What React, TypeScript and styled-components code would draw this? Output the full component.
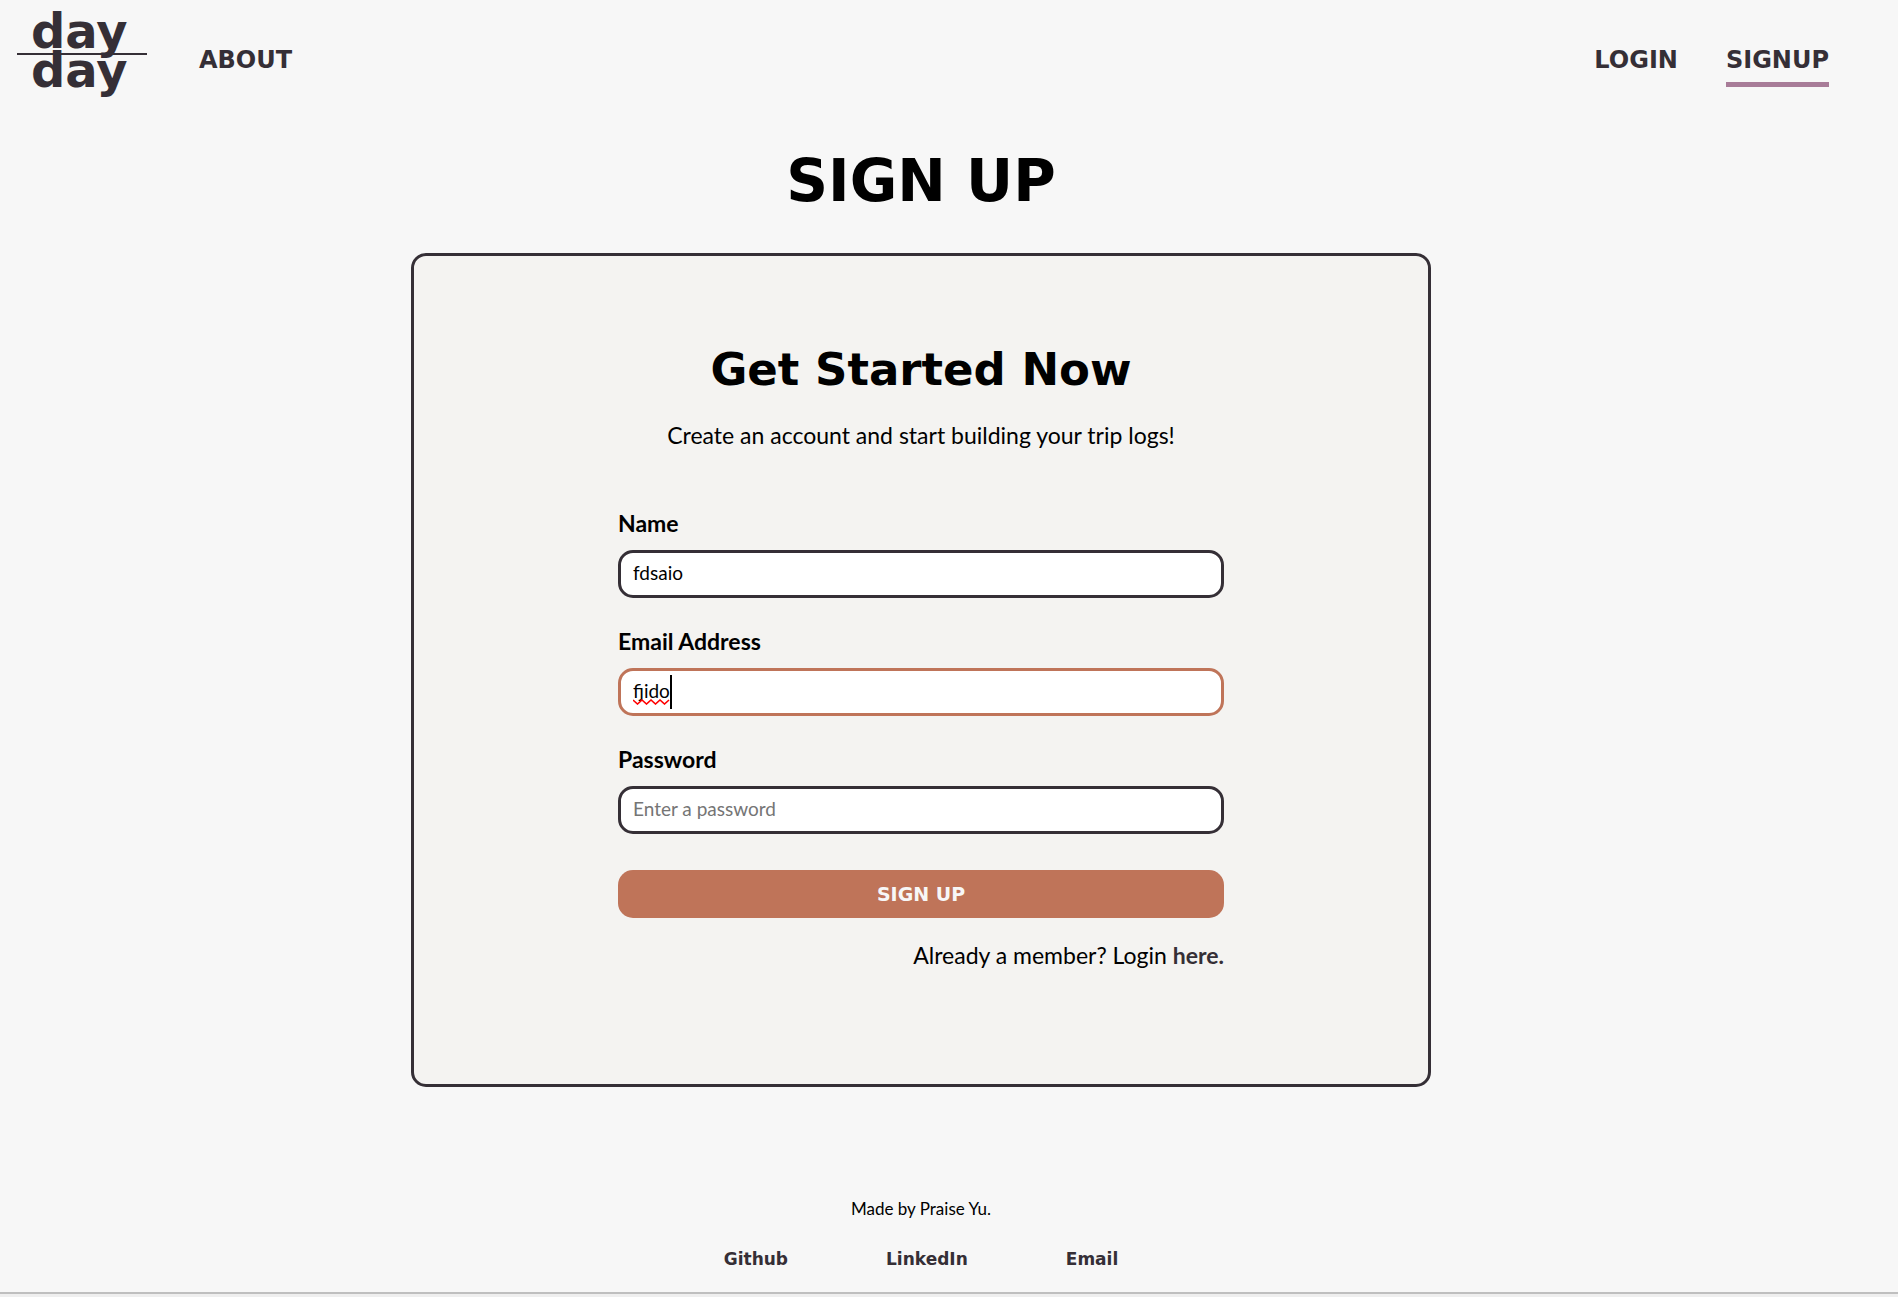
import React from "react";
import styled, { createGlobalStyle } from "styled-components";

const ink = "#352f36";
const clay = "#bf7459";
const paper = "#f7f7f7";
const display = `"DejaVu Sans", "Liberation Sans", sans-serif`;
const body = `Lato, "Open Sans", sans-serif`;

const GlobalStyle = createGlobalStyle`
  *, *::before, *::after { box-sizing: border-box; }
  body { margin: 0; background: ${paper}; color: #000; font-family: ${body}; font-size: 23px; }
  h1, h2, p { margin: 0; }
  a { color: ${ink}; text-decoration: none; }
`;

const Page = styled.div`
  padding-right: 56px;
`;

const Header = styled.header`
  display: flex;
  align-items: flex-end;
  padding: 10px 13px 0 17px;
`;

const LogoLink = styled.a`
  display: block;
  margin-right: 52px;
  svg { display: block; overflow: visible; }
`;

const Nav = styled.nav`
  flex: 1;
  display: flex;
  gap: 48px;
  padding-bottom: 11px;
`;

const NavLink = styled.a<{ $active?: boolean; $push?: boolean }>`
  font: 700 24px/44px ${display};
  margin-left: ${(p) => (p.$push ? "auto" : "0")};
  border-bottom: 5px solid ${(p) => (p.$active ? "#a87c98" : "transparent")};
`;

const Main = styled.main`
  display: flex;
  flex-direction: column;
  align-items: center;
`;

const Title = styled.h1`
  font: 700 58px/72px ${display};
  margin: 47px 0 36px;
`;

const Card = styled.section`
  width: 100%;
  max-width: 1020px;
  padding: 84px 24px 111px;
  border: 3px solid ${ink};
  border-radius: 15px;
  background: #f4f3f1;
  display: flex;
  flex-direction: column;
  align-items: center;
`;

const CardTitle = styled.h2`
  font: 700 45px/60px ${display};
`;

const Lead = styled.p`
  line-height: 36px;
  margin: 17px 0 52px;
`;

const Form = styled.form`
  width: 100%;
  max-width: 606px;
  display: flex;
  flex-direction: column;
`;

const Field = styled.div`
  display: flex;
  flex-direction: column;
  gap: 9px;
  margin-bottom: 25px;
`;

const Label = styled.label`
  font-weight: 700;
  line-height: 36px;
`;

const InputWrap = styled.div`
  position: relative;
`;

const Input = styled.input<{ $active?: boolean }>`
  display: block;
  width: 100%;
  height: 48px;
  padding: 0 12px 3px;
  border: 3px solid ${(p) => (p.$active ? clay : ink)};
  border-radius: 15px;
  background: #fff;
  color: #000;
  font: 400 19px ${body};
  outline: none;
  &::placeholder { color: #757575; opacity: 1; }
`;

const Squiggle = styled.svg`
  position: absolute;
  left: 15px;
  top: 31px;
`;

const Caret = styled.span`
  position: absolute;
  left: 52px;
  top: 7px;
  width: 2px;
  height: 34px;
  background: #000;
`;

const Submit = styled.button`
  height: 48px;
  margin: 11px 0 19px;
  border: 0;
  border-radius: 15px;
  background: ${clay};
  color: ${paper};
  font: 700 19px ${display};
`;

const LoginHint = styled.p`
  line-height: 36px;
  text-align: right;
  a { font-weight: 700; }
`;

const Footer = styled.footer`
  display: flex;
  flex-direction: column;
  align-items: center;
  gap: 24px;
  padding: 109px 0 20px;
`;

const Credit = styled.p`
  font-size: 17px;
  line-height: 26px;
`;

const FooterLinks = styled.nav`
  display: flex;
  gap: 98px;
  a { font: 700 17px/26px ${display}; }
`;

const BottomBar = styled.div`
  height: 5px;
  background: #efefef;
  border-top: 2px solid #bfbfbf;
`;

const Logo = () => (
  <svg width="130" height="88" viewBox="0 0 130 88" fill={ink} role="img" aria-label="day day">
    <rect x="0" y="43" width="130" height="2" />
    <g fontFamily="DejaVu Sans, sans-serif" fontWeight="700" fontSize="48">
      <text x="14" y="38">day</text>
      <text x="14" y="77">day</text>
    </g>
  </svg>
);

export default function App() {
  return (
    <>
      <GlobalStyle />
      <Page>
        <Header>
          <LogoLink href="#home"><Logo /></LogoLink>
          <Nav>
            <NavLink href="#about">ABOUT</NavLink>
            <NavLink href="#login" $push>LOGIN</NavLink>
            <NavLink href="#signup" $active>SIGNUP</NavLink>
          </Nav>
        </Header>
        <Main>
          <Title>SIGN UP</Title>
          <Card>
            <CardTitle>Get Started Now</CardTitle>
            <Lead>Create an account and start building your trip logs!</Lead>
            <Form onSubmit={(e) => e.preventDefault()}>
              <Field>
                <Label htmlFor="name">Name</Label>
                <Input id="name" type="text" defaultValue="fdsaio" />
              </Field>
              <Field>
                <Label htmlFor="email">Email Address</Label>
                <InputWrap>
                  <Input id="email" type="text" defaultValue="fjido" $active />
                  <Squiggle width="37" height="6" viewBox="0 0 37 6" fill="none" stroke="#f00" strokeWidth="1.6">
                    <path d="M0 1 l4.5 4 l4.5 -4 l4.5 4 l4.5 -4 l4.5 4 l4.5 -4 l4.5 4 l4.5 -4" />
                  </Squiggle>
                  <Caret />
                </InputWrap>
              </Field>
              <Field>
                <Label htmlFor="password">Password</Label>
                <Input id="password" type="password" placeholder="Enter a password" />
              </Field>
              <Submit type="submit">SIGN UP</Submit>
              <LoginHint>
                Already a member? Login <a href="#login">here.</a>
              </LoginHint>
            </Form>
          </Card>
        </Main>
        <Footer>
          <Credit>Made by Praise Yu.</Credit>
          <FooterLinks>
            <a href="#github">Github</a>
            <a href="#linkedin">LinkedIn</a>
            <a href="#email">Email</a>
          </FooterLinks>
        </Footer>
      </Page>
      <BottomBar />
    </>
  );
}
